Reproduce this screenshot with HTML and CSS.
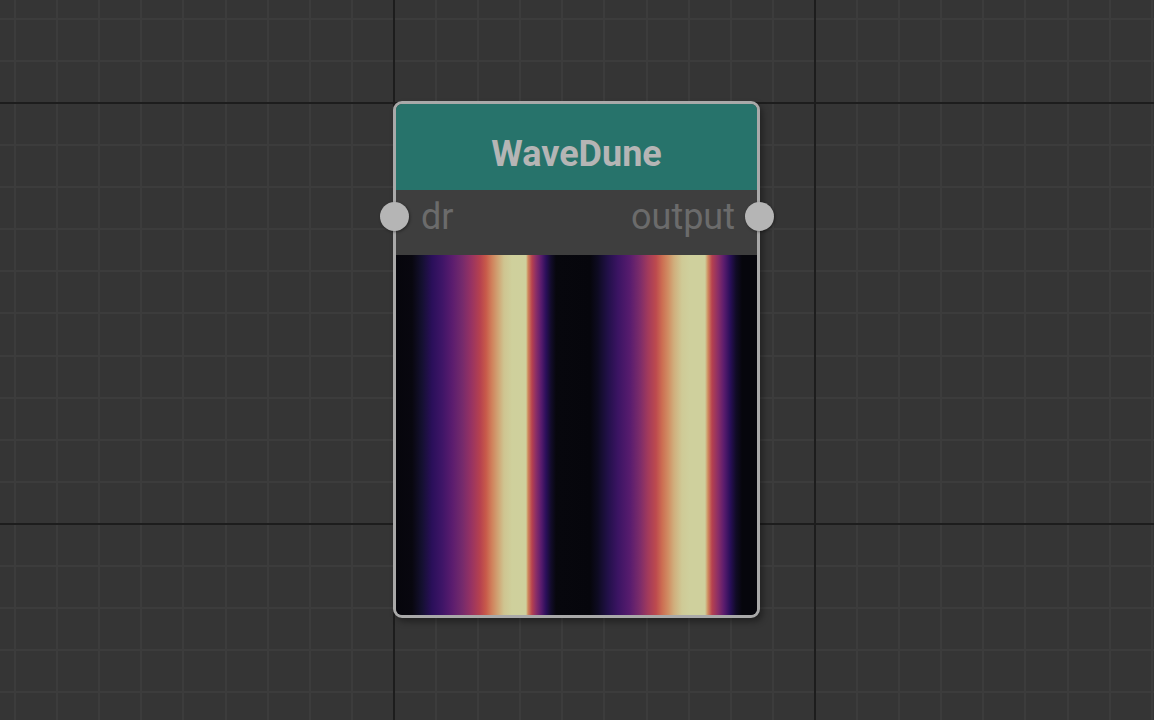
FILE: index.html
```html
<!DOCTYPE html>
<html lang="en">
<head>
<meta charset="utf-8">
<title>WaveDune</title>
<link rel="stylesheet" href="styles.css">
</head>
<body>
<div class="canvas">
  <div class="node">
    <div class="node-header">WaveDune</div>
    <div class="node-ports">
      <span class="port port-in"></span>
      <span class="port-label">dr</span>
      <span class="port-label">output</span>
      <span class="port port-out"></span>
    </div>
    <div class="node-preview"></div>
  </div>
</div>
</body>
</html>
```
FILE: styles.css
```css
html, body {
  margin: 0;
  padding: 0;
  background: #353535;
}

.canvas {
  position: relative;
  width: 1154px;
  height: 720px;
  overflow: hidden;
  background-color: #353535;
  background-image:
    repeating-linear-gradient(90deg, transparent 0 393px, #1d1d1d 393px 395px, transparent 395px 421px),
    repeating-linear-gradient(180deg, transparent 0 102px, #1d1d1d 102px 104px, transparent 104px 421px),
    repeating-linear-gradient(90deg, transparent 0 14.1px, #3c3c3c 14.1px 16.1px, transparent 16.1px 42.1px),
    repeating-linear-gradient(180deg, transparent 0 17.8px, #3c3c3c 17.8px 19.8px, transparent 19.8px 42.1px);
  font-family: Roboto, "Liberation Sans", sans-serif;
}

.node {
  position: absolute;
  left: 393px;
  top: 101px;
  width: 367px;
  box-sizing: border-box;
  border: 3px solid #a9a9a9;
  border-radius: 9px;
  background: #3e3e3e;
  box-shadow: 3px 4px 6px rgba(0, 0, 0, 0.35);
  display: flex;
  flex-direction: column;
}

.node-header {
  height: 86px;
  box-sizing: border-box;
  padding-top: 13px;
  display: flex;
  align-items: center;
  justify-content: center;
  background: #27736b;
  border-radius: 6px 6px 0 0;
  color: #b5b5b5;
  font-weight: 700;
  font-size: 36px;
}

.node-ports {
  position: relative;
  height: 65px;
  box-sizing: border-box;
  padding: 0 22px 12px 25px;
  display: flex;
  align-items: center;
  justify-content: space-between;
  background: #3e3e3e;
}

.port-label {
  color: #6b6b6b;
  font-size: 36px;
  line-height: 1;
}

.port {
  position: absolute;
  top: 12px;
  width: 29px;
  height: 29px;
  border-radius: 50%;
  background: #b5b5b5;
  box-shadow: 1px 1px 3px rgba(0, 0, 0, 0.4);
}

.port-in { left: -16.5px; }
.port-out { right: -16.5px; }

.node-preview {
  height: 360px;
  border-radius: 0 0 6px 6px;
  background: linear-gradient(90deg,
    #06060c 0px,
    #08070f 16px,
    #141030 26px,
    #2a0f5a 36px,
    #3e1567 46px,
    #5a1c6e 56px,
    #742a6c 66px,
    #963263 75px,
    #b6414f 84px,
    #c85a4a 90px,
    #d0825c 96px,
    #d0a474 102px,
    #cfc490 108px,
    #cfd09c 116px,
    #cfd09d 130px,
    #d0885c 132px,
    #b6414f 136px,
    #8a2e67 140px,
    #5a1c6e 145px,
    #2a0f5a 150px,
    #120c2a 155px,
    #07070d 160px,
    #06060c 194px,
    #0e0b22 202px,
    #221049 212px,
    #3b1463 222px,
    #581c6e 234px,
    #7c2c6a 244px,
    #a23a5c 252px,
    #bd4a4e 260px,
    #cc6d52 266px,
    #d08c62 272px,
    #d0ae7c 278px,
    #cfca96 286px,
    #cfd09d 294px,
    #cfd09d 309px,
    #d08a5e 312px,
    #b6414f 316px,
    #8a2e67 322px,
    #5a1c6e 328px,
    #2a0f5a 334px,
    #100b26 340px,
    #06060c 346px,
    #06060c 361px);
}
```
